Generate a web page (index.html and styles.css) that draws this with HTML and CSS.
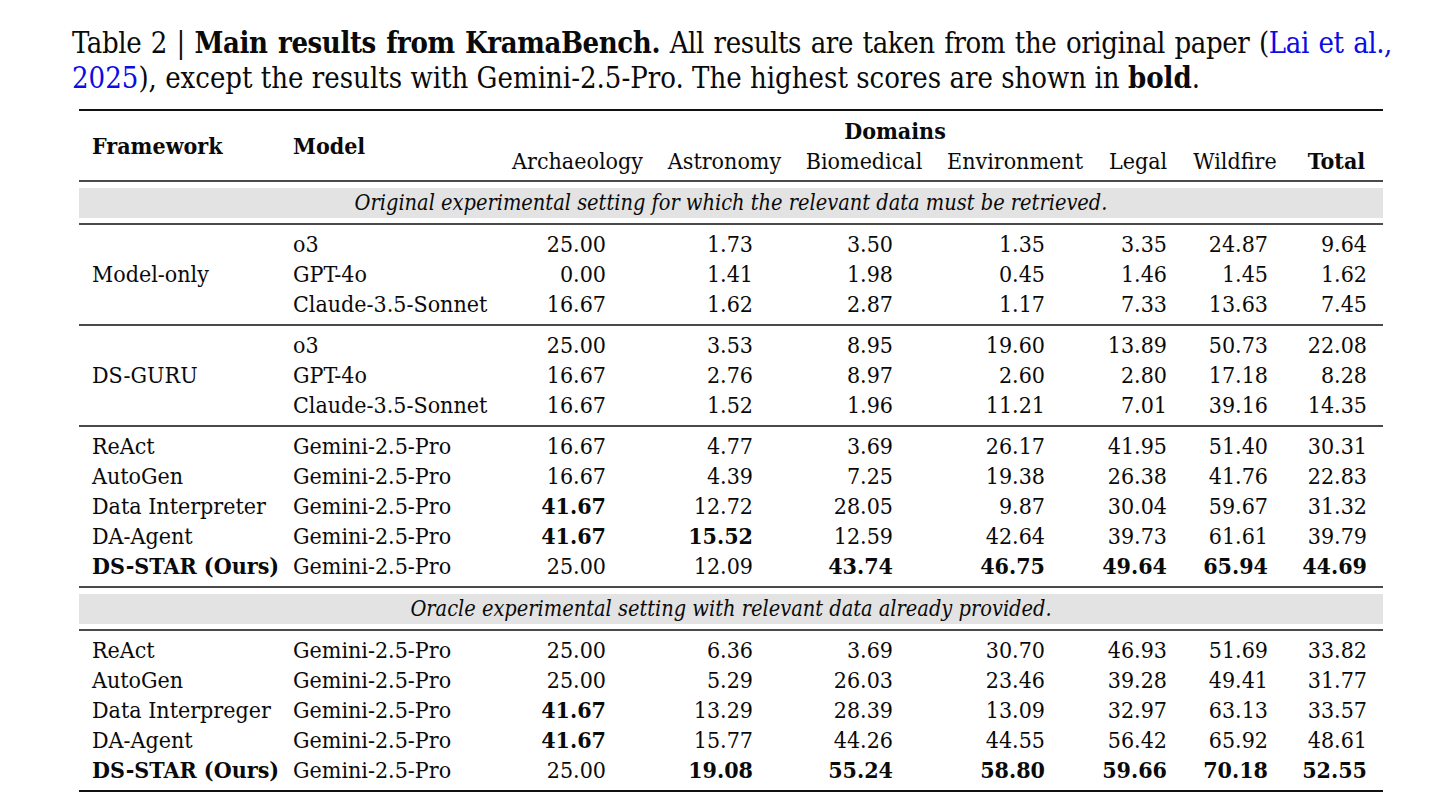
FILE: index.html
```html
<!DOCTYPE html>
<html lang="en">
<head>
<meta charset="utf-8">
<title>Table 2 | Main results from KramaBench</title>
<link rel="stylesheet" href="styles.css">
</head>
<body>
<div class="page">
  <p class="caption"><span class="cap-line1">Table 2 | <b>Main results from KramaBench.</b> All results are taken from the original paper (<a class="cite" href="#">Lai et al.,</a></span><span class="cap-line2"><a class="cite" href="#">2025</a>), except the results with Gemini-2.5-Pro. The highest scores are shown in <b>bold</b>.</span></p>

  <div class="results">
    <div class="head grid">
      <div class="h-fw">Framework</div>
      <div class="h-model">Model</div>
      <div class="h-domains">Domains</div>
      <div class="h-col">Archaeology</div>
      <div class="h-col">Astronomy</div>
      <div class="h-col">Biomedical</div>
      <div class="h-col">Environment</div>
      <div class="h-col">Legal</div>
      <div class="h-col">Wildfire</div>
      <div class="h-col h-total">Total</div>
    </div>

    <div class="rule"></div>
    <div class="band">Original experimental setting for which the relevant data must be retrieved.</div>
    <div class="rule"></div>

    <div class="group grid">
      <div class="fw span3">Model-only</div>
      <div class="model">o3</div><div class="n c3">25.00</div><div class="n c4">1.73</div><div class="n c5">3.50</div><div class="n c6">1.35</div><div class="n c7">3.35</div><div class="n c8">24.87</div><div class="n c9">9.64</div>
      <div class="model">GPT-4o</div><div class="n c3">0.00</div><div class="n c4">1.41</div><div class="n c5">1.98</div><div class="n c6">0.45</div><div class="n c7">1.46</div><div class="n c8">1.45</div><div class="n c9">1.62</div>
      <div class="model">Claude-3.5-Sonnet</div><div class="n c3">16.67</div><div class="n c4">1.62</div><div class="n c5">2.87</div><div class="n c6">1.17</div><div class="n c7">7.33</div><div class="n c8">13.63</div><div class="n c9">7.45</div>
    </div>

    <div class="rule"></div>

    <div class="group grid">
      <div class="fw span3">DS-GURU</div>
      <div class="model">o3</div><div class="n c3">25.00</div><div class="n c4">3.53</div><div class="n c5">8.95</div><div class="n c6">19.60</div><div class="n c7">13.89</div><div class="n c8">50.73</div><div class="n c9">22.08</div>
      <div class="model">GPT-4o</div><div class="n c3">16.67</div><div class="n c4">2.76</div><div class="n c5">8.97</div><div class="n c6">2.60</div><div class="n c7">2.80</div><div class="n c8">17.18</div><div class="n c9">8.28</div>
      <div class="model">Claude-3.5-Sonnet</div><div class="n c3">16.67</div><div class="n c4">1.52</div><div class="n c5">1.96</div><div class="n c6">11.21</div><div class="n c7">7.01</div><div class="n c8">39.16</div><div class="n c9">14.35</div>
    </div>

    <div class="rule"></div>

    <div class="group grid">
      <div class="fw">ReAct</div><div class="model">Gemini-2.5-Pro</div><div class="n c3">16.67</div><div class="n c4">4.77</div><div class="n c5">3.69</div><div class="n c6">26.17</div><div class="n c7">41.95</div><div class="n c8">51.40</div><div class="n c9">30.31</div>
      <div class="fw">AutoGen</div><div class="model">Gemini-2.5-Pro</div><div class="n c3">16.67</div><div class="n c4">4.39</div><div class="n c5">7.25</div><div class="n c6">19.38</div><div class="n c7">26.38</div><div class="n c8">41.76</div><div class="n c9">22.83</div>
      <div class="fw">Data Interpreter</div><div class="model">Gemini-2.5-Pro</div><div class="n c3 best">41.67</div><div class="n c4">12.72</div><div class="n c5">28.05</div><div class="n c6">9.87</div><div class="n c7">30.04</div><div class="n c8">59.67</div><div class="n c9">31.32</div>
      <div class="fw">DA-Agent</div><div class="model">Gemini-2.5-Pro</div><div class="n c3 best">41.67</div><div class="n c4 best">15.52</div><div class="n c5">12.59</div><div class="n c6">42.64</div><div class="n c7">39.73</div><div class="n c8">61.61</div><div class="n c9">39.79</div>
      <div class="fw ours">DS-STAR (Ours)</div><div class="model">Gemini-2.5-Pro</div><div class="n c3">25.00</div><div class="n c4">12.09</div><div class="n c5 best">43.74</div><div class="n c6 best">46.75</div><div class="n c7 best">49.64</div><div class="n c8 best">65.94</div><div class="n c9 best">44.69</div>
    </div>

    <div class="rule"></div>
    <div class="band">Oracle experimental setting with relevant data already provided.</div>
    <div class="rule"></div>

    <div class="group grid">
      <div class="fw">ReAct</div><div class="model">Gemini-2.5-Pro</div><div class="n c3">25.00</div><div class="n c4">6.36</div><div class="n c5">3.69</div><div class="n c6">30.70</div><div class="n c7">46.93</div><div class="n c8">51.69</div><div class="n c9">33.82</div>
      <div class="fw">AutoGen</div><div class="model">Gemini-2.5-Pro</div><div class="n c3">25.00</div><div class="n c4">5.29</div><div class="n c5">26.03</div><div class="n c6">23.46</div><div class="n c7">39.28</div><div class="n c8">49.41</div><div class="n c9">31.77</div>
      <div class="fw">Data Interpreger</div><div class="model">Gemini-2.5-Pro</div><div class="n c3 best">41.67</div><div class="n c4">13.29</div><div class="n c5">28.39</div><div class="n c6">13.09</div><div class="n c7">32.97</div><div class="n c8">63.13</div><div class="n c9">33.57</div>
      <div class="fw">DA-Agent</div><div class="model">Gemini-2.5-Pro</div><div class="n c3 best">41.67</div><div class="n c4">15.77</div><div class="n c5">44.26</div><div class="n c6">44.55</div><div class="n c7">56.42</div><div class="n c8">65.92</div><div class="n c9">48.61</div>
      <div class="fw ours">DS-STAR (Ours)</div><div class="model">Gemini-2.5-Pro</div><div class="n c3">25.00</div><div class="n c4 best">19.08</div><div class="n c5 best">55.24</div><div class="n c6 best">58.80</div><div class="n c7 best">59.66</div><div class="n c8 best">70.18</div><div class="n c9 best">52.55</div>
    </div>
  </div>
</div>
</body>
</html>
```

FILE: styles.css
```css
html, body {
  margin: 0;
  padding: 0;
  background: #ffffff;
}

body {
  font-family: "DejaVu Serif Condensed", "DejaVu Serif", serif;
  font-stretch: condensed;
  color: #0a0a0a;
}

.page {
  width: 1450px;
  height: 812px;
  overflow: hidden;
}

.caption {
  margin: 0;
  padding: 26px 0 0 72px;
  width: 1320px;
  font-size: 29px;
  line-height: 35px;
}

.cap-line1 {
  display: block;
  letter-spacing: -0.4px;
  word-spacing: -2px;
  text-align: justify;
  text-align-last: justify;
}

.cap-line2 {
  display: block;
  white-space: nowrap;
}

.caption b {
  font-weight: bold;
}

.cite {
  color: #0b0be6;
  text-decoration: none;
}

.results {
  margin: 13px 0 0 79px;
  width: 1304px;
  border-top: 2px solid #111;
  border-bottom: 2px solid #111;
  font-size: 23px;
  line-height: 30px;
}

.grid {
  display: grid;
  grid-template-columns: 202px 219px 155px 139px 140px 162px 84px 110px 93px;
  grid-auto-rows: 30px;
}

.head {
  padding: 5px 0 4px;
}

.h-fw, .h-model {
  grid-row: 1 / span 2;
  align-self: center;
  font-weight: bold;
  white-space: nowrap;
}

.h-fw {
  grid-column: 1;
  padding-left: 13px;
}

.h-model {
  grid-column: 2;
  padding-left: 12px;
}

.h-domains {
  grid-row: 1;
  grid-column: 3 / span 6;
  text-align: center;
  font-weight: bold;
}

.h-col {
  grid-row: 2;
  text-align: center;
  white-space: nowrap;
}

.h-total {
  font-weight: bold;
}

.rule {
  height: 2px;
  background: #4a4a4a;
}

.band {
  margin: 6px 0 5px;
  height: 30px;
  background: #e3e3e3;
  text-align: center;
  font-style: italic;
  font-size: 21.6px;
  line-height: 30px;
  white-space: nowrap;
}

.group {
  padding: 4px 0 5px;
}

.fw {
  grid-column: 1;
  padding-left: 13px;
  white-space: nowrap;
}

.span3 {
  grid-row: span 3;
  align-self: center;
}

.ours {
  font-weight: bold;
}

.model {
  grid-column: 2;
  padding-left: 12px;
  white-space: nowrap;
}

.n {
  text-align: right;
  white-space: nowrap;
}

.c3 { padding-right: 49px; }
.c4 { padding-right: 41px; }
.c5 { padding-right: 41px; }
.c6 { padding-right: 51px; }
.c7 { padding-right: 13px; }
.c8 { padding-right: 22px; }
.c9 { padding-right: 16px; }

.best {
  font-weight: bold;
}
```
